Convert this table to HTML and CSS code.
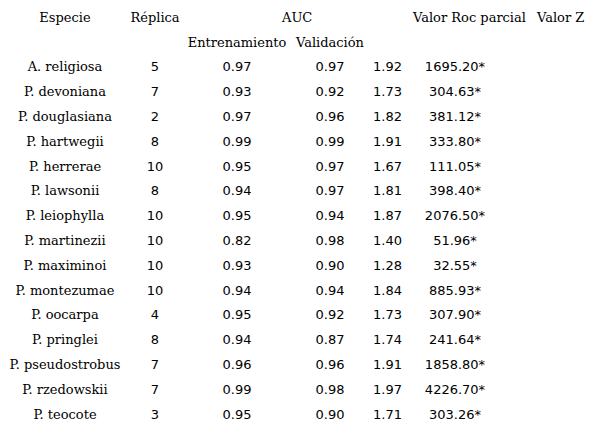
FILE: index.html
```html
<!DOCTYPE html>
<html lang="es">
<head>
    <meta charset="UTF-8">
    <meta name="viewport" content="width=device-width, initial-scale=1.0">
    <title>Valores AUC por especie</title>
    <link rel="stylesheet" href="styles.css">
</head>
<body>

    <!-- Tabla de resultados del modelo -->
    <div class="results" id="results">
        <div class="cell head">Especie</div>
        <div class="cell head">Réplica</div>
        <div class="cell head head-auc">AUC</div>
        <div class="cell head"></div>
        <div class="cell head head-roc">Valor Roc parcial</div>
        <div class="cell head head-z">Valor Z</div>

        <div class="cell head"></div>
        <div class="cell head"></div>
        <div class="cell head">Entrenamiento</div>
        <div class="cell head">Validación</div>
        <div class="cell head"></div>
        <div class="cell head"></div>
        <div class="cell head"></div>
        <!-- Filas de especies se generarán aquí -->
    </div>

    <script>
        const species = [
            {name: "A. religiosa", rep: 5, train: "0.97", valid: "0.97", ratio: "1.92", roc: "1695.20*"},
            {name: "P. devoniana", rep: 7, train: "0.93", valid: "0.92", ratio: "1.73", roc: "304.63*"},
            {name: "P. douglasiana", rep: 2, train: "0.97", valid: "0.96", ratio: "1.82", roc: "381.12*"},
            {name: "P. hartwegii", rep: 8, train: "0.99", valid: "0.99", ratio: "1.91", roc: "333.80*"},
            {name: "P. herrerae", rep: 10, train: "0.95", valid: "0.97", ratio: "1.67", roc: "111.05*"},
            {name: "P. lawsonii", rep: 8, train: "0.94", valid: "0.97", ratio: "1.81", roc: "398.40*"},
            {name: "P. leiophylla", rep: 10, train: "0.95", valid: "0.94", ratio: "1.87", roc: "2076.50*"},
            {name: "P. martinezii", rep: 10, train: "0.82", valid: "0.98", ratio: "1.40", roc: "51.96*"},
            {name: "P. maximinoi", rep: 10, train: "0.93", valid: "0.90", ratio: "1.28", roc: "32.55*"},
            {name: "P. montezumae", rep: 10, train: "0.94", valid: "0.94", ratio: "1.84", roc: "885.93*"},
            {name: "P. oocarpa", rep: 4, train: "0.95", valid: "0.92", ratio: "1.73", roc: "307.90*"},
            {name: "P. pringlei", rep: 8, train: "0.94", valid: "0.87", ratio: "1.74", roc: "241.64*"},
            {name: "P. pseudostrobus", rep: 7, train: "0.96", valid: "0.96", ratio: "1.91", roc: "1858.80*"},
            {name: "P. rzedowskii", rep: 7, train: "0.99", valid: "0.98", ratio: "1.97", roc: "4226.70*"},
            {name: "P. teocote", rep: 3, train: "0.95", valid: "0.90", ratio: "1.71", roc: "303.26*"}
        ];

        const results = document.getElementById("results");
        species.forEach(sp => {
            const values = [sp.rep, sp.train, sp.valid, sp.ratio, sp.roc, ""];
            const nameCell = document.createElement("div");
            nameCell.classList.add("cell", "name");
            nameCell.textContent = sp.name;
            results.appendChild(nameCell);
            values.forEach(v => {
                const cell = document.createElement("div");
                cell.classList.add("cell", "num");
                cell.textContent = v;
                results.appendChild(cell);
            });
        });
    </script>
</body>
</html>
```

FILE: styles.css
```css
body {
    margin: 0;
    background-color: #fff;
    color: #000;
    font-family: "DejaVu Serif", serif;
    font-size: 13px;
}

.results {
    display: grid;
    grid-template-columns: 130px 50px 114px 72px 43px 92px 1fr;
    grid-auto-rows: 24.8px;
    padding-top: 5px;
}

.cell {
    display: flex;
    align-items: center;
    justify-content: center;
    white-space: nowrap;
}

.head-auc {
    grid-column: span 2;
    justify-content: flex-start;
    padding-left: 102px;
}

.head-roc {
    justify-content: flex-start;
    padding-left: 4px;
}

.head-z {
    justify-content: flex-start;
    padding-left: 36px;
}

.num {
    font-family: "DejaVu Sans", sans-serif;
}
```
